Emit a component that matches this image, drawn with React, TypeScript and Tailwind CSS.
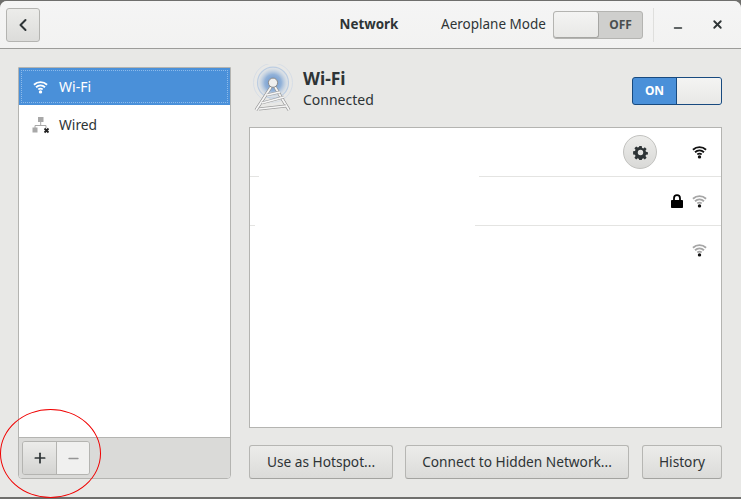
import { ChevronLeft, Minus, Plus, X } from "lucide-react";

const font = { fontFamily: '"Noto Sans", "Open Sans", sans-serif' };

// symbolic wifi glyph, the arcs get a colour from the caller
const WifiIcon = ({ arcs, dot, className }: { arcs: string; dot: string; className?: string }) => (
  <svg viewBox="0 0 16 14" className={className}>
    <path d="M1 4.6 C5 0.9 11 0.9 15 4.6" fill="none" stroke={arcs} strokeWidth="2" />
    <path d="M3.2 7.2 C6 4.8 10 4.8 12.8 7.2" fill="none" stroke={arcs} strokeWidth="2" />
    <path d="M5.6 9.6 C7 8.6 9 8.6 10.4 9.6" fill="none" stroke={arcs} strokeWidth="1.8" />
    <circle cx="8" cy="12.2" r="1.8" fill={dot} />
  </svg>
);

const WiredIcon = () => (
  <svg viewBox="0 0 18 18" className="w-[18px] h-[18px]">
    <rect x="6" y="1" width="5.5" height="5" fill="#a8a8a8" />
    <path d="M8.7 6v3M3 12V9.5h11V12" fill="none" stroke="#a8a8a8" strokeWidth="1" />
    <rect x="0.5" y="11.5" width="5" height="5" fill="#a8a8a8" />
    <path d="M12.5 12.5l4 4M16.5 12.5l-4 4" stroke="#222" strokeWidth="1.8" />
  </svg>
);

const TowerIcon = () => (
  <svg viewBox="0 0 44 50" className="w-[44px] h-[50px] shrink-0">
    <defs>
      <radialGradient id="glow">
        <stop offset="0" stopColor="#4a7fc4" stopOpacity="0.85" />
        <stop offset="0.55" stopColor="#6d9ad2" stopOpacity="0.7" />
        <stop offset="1" stopColor="#a9c3e2" stopOpacity="0.1" />
      </radialGradient>
    </defs>
    <circle cx="22" cy="18.7" r="19.5" fill="none" stroke="#d6dde6" strokeWidth="1" />
    <circle cx="22" cy="18.7" r="15.5" fill="none" stroke="#bccde2" strokeWidth="1.2" />
    <circle cx="22" cy="18.7" r="15" fill="url(#glow)" />
    <path d="M20 23 L5 46 M24 23 L38 46" stroke="#8f8f8f" strokeWidth="3.2" />
    <path d="M20 23 L5 46 M24 23 L38 46" stroke="#f4f4f4" strokeWidth="1.9" />
    <path d="M16 31 L29 28 M11 39 L33 33 M8 45 L35 42" stroke="#9e9e9e" strokeWidth="2.8" />
    <path d="M16 31 L29 28 M11 39 L33 33 M8 45 L35 42" stroke="#f6f6f6" strokeWidth="1.6" />
    <circle cx="22" cy="18.7" r="4.6" fill="#efefef" stroke="#8c8c8c" strokeWidth="1" />
  </svg>
);

const GearIcon = () => (
  <svg viewBox="0 0 16 16" className="w-[15px] h-[15px]">
    <path
      d="M6.7 1h2.6l.3 2 1.3.6 1.7-1.2 1.9 1.9-1.2 1.7.6 1.3 2 .3v2.6l-2 .3-.6 1.3 1.2 1.7-1.9 1.9-1.7-1.2-1.3.6-.3 2H6.7l-.3-2-1.3-.6-1.7 1.2-1.9-1.9 1.2-1.7-.6-1.3-2-.3V6.7l2-.3.6-1.3-1.2-1.7 1.9-1.9 1.7 1.2 1.3-.6z"
      fill="#2e3436"
      fillRule="evenodd"
    />
    <circle cx="8" cy="8" r="2.9" fill="#e3e3e1" />
  </svg>
);

const LockIcon = () => (
  <svg viewBox="0 0 12 14" className="w-[12px] h-[14px]">
    <path d="M3 6.5V4.2a3 3 0 0 1 6 0v2.3" fill="none" stroke="#000" strokeWidth="1.8" />
    <rect x="0" y="6" width="12" height="8" rx="0.8" fill="#000" />
  </svg>
);

const RowDivider = ({ left, right }: { left: string; right: string }) => (
  <div className="flex h-px">
    <div className={`${left} bg-[#e4e4e2]`} />
    <div className={`${right} ml-auto bg-[#e4e4e2]`} />
  </div>
);

const FootButton = ({ label, className }: { label: string; className: string }) => (
  <button className={`${className} h-[34px] rounded-[3px] border border-[#b6b6b3] border-b-[#a3a3a0] bg-gradient-to-b from-[#ececea] to-[#dbdbd9] text-[13.7px] text-[#2e3436]`}>
    {label}
  </button>
);

export default function App() {
  return (
    <div style={font} className="relative w-[741px] h-[499px] overflow-hidden bg-[#6f6f6d] pt-px">
      <div className="flex flex-col h-[496px] rounded-t-[7px] overflow-hidden bg-[#e8e8e6]">
        {/* header bar */}
        <header className="flex items-center h-[47px] shrink-0 border-b border-[#9c9c99] bg-gradient-to-b from-[#f5f5f5] to-[#f2f2f1] pl-[6px] box-content">
          <button className="flex items-center justify-center w-[34px] h-[34px] rounded-[3px] border border-[#b4b4b1] bg-gradient-to-b from-[#ececea] to-[#dcdcda]">
            <ChevronLeft size={20} strokeWidth={2.4} className="text-[#2e3436]" />
          </button>
          <div className="ml-[299px] w-[60px] text-center text-[13.4px] font-bold text-[#2e3436]">Network</div>
          <div className="ml-[42px] text-[13.5px] text-[#2e3436] whitespace-nowrap">Aeroplane Mode</div>
          <div className="ml-auto flex items-center">
            <div className="flex w-[90px] h-[28px] rounded-[3px] border border-[#b4b4b1] bg-[#cfcfcd]">
              <div className="w-[45px] rounded-[3px] border-r border-b border-[#a6a6a3] bg-gradient-to-b from-[#f4f4f3] to-[#e8e8e6]" />
              <div className="flex-1 flex items-center justify-center text-[12px] font-bold text-[#4a4f50]">OFF</div>
            </div>
            <div className="ml-[10px] w-px h-[34px] bg-[#dfdfdd]" />
            <div className="flex items-center justify-center w-[47px]">
              <Minus size={12} strokeWidth={3} className="text-[#2e3436] mt-[7px]" />
            </div>
            <div className="flex items-center justify-center w-[33px] mr-[7px]">
              <X size={13} strokeWidth={3.4} className="text-[#2e3436]" />
            </div>
          </div>
        </header>

        <main className="flex flex-1 min-h-0 pl-[18px] pr-[19px] pt-[18px] pb-[18px] gap-[18px]">
          {/* left sidebar */}
          <aside className="flex flex-col w-[213px] shrink-0 rounded-b-[4px] border border-[#b4b4b1] bg-white overflow-hidden">
            <div className="flex items-center h-[37px] shrink-0 bg-[#4a90d9] m-0 relative">
              <div className="absolute inset-[2px] border border-dotted border-[#8dbaea]" />
              <WifiIcon arcs="#ffffff" dot="#ffffff" className="ml-[14px] w-[15px] h-[14px]" />
              <span className="ml-[11px] text-[14px] text-white">Wi-Fi</span>
            </div>
            <div className="flex items-center h-[40px] shrink-0">
              <span className="ml-[13px]"><WiredIcon /></span>
              <span className="ml-[9px] text-[13.8px] text-[#2e3436]">Wired</span>
            </div>
            <div className="flex-1" />
            <div className="flex items-center h-[41px] shrink-0 border-t border-[#b4b4b1] bg-[#dadad8] pl-[3px]">
              <div className="flex w-[68px] h-[34px] rounded-[3px] border border-[#b4b4b1] overflow-hidden">
                <div className="flex items-center justify-center w-[34px] border-r border-[#b4b4b1] bg-gradient-to-b from-[#ececea] to-[#d4d4d2]">
                  <Plus size={16} strokeWidth={2.6} className="text-[#2e3436]" />
                </div>
                <div className="flex items-center justify-center flex-1 bg-[#f0f0ef]">
                  <Minus size={15} strokeWidth={2.6} className="text-[#959595]" />
                </div>
              </div>
            </div>
          </aside>

          {/* wifi panel */}
          <section className="flex flex-col flex-1 min-w-0">
            <div className="flex items-start h-[60px] shrink-0 pl-[2px]">
              <div className="-mt-[3px] -mr-[2px]"><TowerIcon /></div>
              <div className="ml-[10px]">
                <div className="text-[17.5px] font-bold leading-[22px] text-[#2e3436]">Wi-Fi</div>
                <div className="text-[14px] leading-[22px] text-[#2e3436]">Connected</div>
              </div>
              <div className="ml-auto mt-[10px] flex w-[90px] h-[28px] rounded-[3px] border border-[#184a7f] bg-[#4a90d9] overflow-hidden">
                <div className="flex-1 flex items-center justify-center text-[12px] font-bold text-white">ON</div>
                <div className="w-[45px] border-l border-[#184a7f] bg-gradient-to-b from-[#f4f4f3] to-[#e8e8e6]" />
              </div>
            </div>

            <div className="flex flex-col h-[301px] shrink-0 border border-[#b4b4b1] bg-white">
              <div className="flex items-center justify-end h-[48px] shrink-0">
                <div className="flex items-center justify-center w-[34px] h-[34px] rounded-full border border-[#c2c2bf] bg-gradient-to-b from-[#ececea] to-[#d9d9d7]">
                  <GearIcon />
                </div>
                <WifiIcon arcs="#111111" dot="#111111" className="ml-[35px] mr-[14px] w-[15px] h-[14px]" />
              </div>
              <RowDivider left="w-[9px]" right="w-[242px]" />
              <div className="flex items-center justify-end h-[48px] shrink-0">
                <LockIcon />
                <WifiIcon arcs="#a6a6a6" dot="#111111" className="ml-[9px] mr-[14px] w-[15px] h-[14px]" />
              </div>
              <RowDivider left="w-[5px]" right="w-[246px]" />
              <div className="flex items-center justify-end h-[48px] shrink-0">
                <WifiIcon arcs="#a6a6a6" dot="#111111" className="mr-[14px] w-[15px] h-[14px]" />
              </div>
            </div>

            <div className="flex items-center mt-[17px]">
              <FootButton label="Use as Hotspot..." className="w-[144px]" />
              <FootButton label="Connect to Hidden Network..." className="ml-[12px] w-[224px]" />
              <FootButton label="History" className="ml-auto w-[80px]" />
            </div>
          </section>
        </main>
      </div>

      {/* red hand-drawn annotation */}
      <div className="absolute left-0 top-[409px] w-[101px] h-[89px] rounded-[50%] border border-[#f00000]" />
    </div>
  );
}
